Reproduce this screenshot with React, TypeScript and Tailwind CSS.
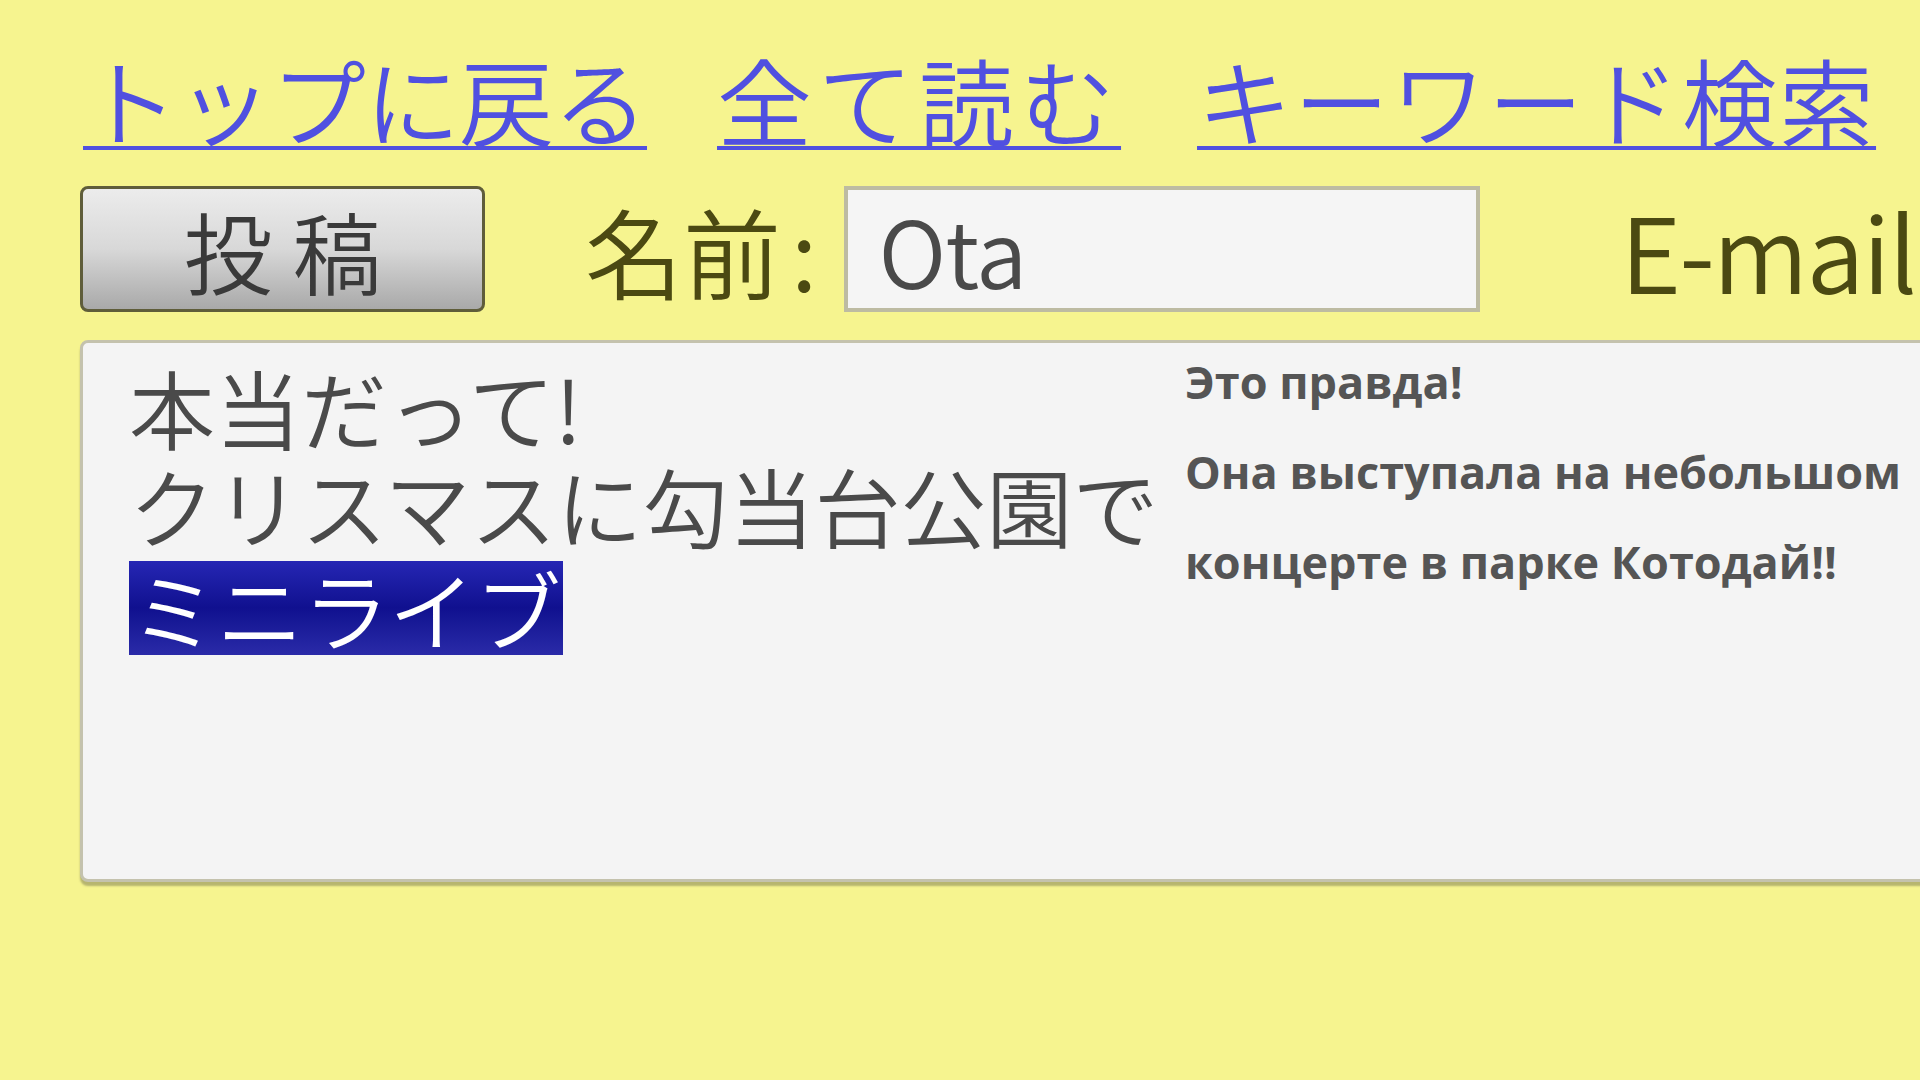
import React from 'react';

const jp = '"Noto Sans CJK JP", "Noto Sans", sans-serif';

export default function App() {
  return (
    <div
      className="w-[1920px] h-[1080px] overflow-hidden bg-[#f6f48f] pl-[80px] pt-[44px]"
      style={{ fontFamily: jp }}
    >
      {/* nav links */}
      <nav className="flex items-end pl-[3px] whitespace-nowrap">
        <a href="#" className="text-[95px] leading-[110px] font-[350] text-[#5050e0] underline decoration-[4px] underline-offset-[6px] tracking-[-1px]">
          トップに戻る
        </a>
        <a href="#" className="ml-[70px] text-[95px] leading-[110px] font-[350] text-[#5050e0] underline decoration-[4px] underline-offset-[6px] tracking-[6px]">
          全て読む
        </a>
        <a href="#" className="ml-[76px] text-[95px] leading-[110px] font-[350] text-[#5050e0] underline decoration-[4px] underline-offset-[6px] tracking-[2px]">
          キーワード検索
        </a>
      </nav>

      {/* form row */}
      <div className="flex items-center mt-[32px] whitespace-nowrap">
        <button className="w-[405px] h-[126px] shrink-0 rounded-[8px] border-[3px] border-[#5f5d3a] bg-gradient-to-b from-[#ececec] via-[#d8d8d8] to-[#a9a9a9] text-[89px] leading-none font-[350] text-[#3a3a3a] tracking-[20px] pl-[20px]">
          投稿
        </button>
        <span className="ml-[100px] text-[98px] leading-none font-[350] text-[#4b4912]">
          名前<span className="ml-[10px]">:</span>
        </span>
        <div className="ml-[27px] w-[636px] h-[126px] shrink-0 bg-[#f5f5f5] border-[4px] border-[#bdbba2] flex items-center pl-[30px]">
          <span className="text-[92px] leading-none font-[350] text-[#4a4a4a] tracking-[-1px]">Ota</span>
        </div>
        <span className="ml-[140px] text-[104px] leading-none font-[350] text-[#4b4912] tracking-[-2px]">E-mail</span>
      </div>

      {/* message area */}
      <div className="mt-[28px] w-[1900px] h-[542px] bg-[#f4f4f4] border-[3px] border-[#c4c2ad] rounded-l-[8px] shadow-[0_4px_2px_rgba(120,118,80,0.5)] flex">
        <div className="w-[1102px] pl-[46px] pt-[15px] text-[86px] leading-[98px] font-[350] text-[#4a4a4a] whitespace-nowrap">
          <div>本当だって!</div>
          <div>クリスマスに勾当台公園で</div>
          <div className="pt-[5px]">
            <span className="inline-block bg-gradient-to-b from-[#2626b4] via-[#10108f] to-[#2a2aa8] text-white px-[2px] leading-[94px]">
              ミニライブ
            </span>
          </div>
        </div>
        <div
          className="-mt-[6px] text-[45px] leading-[90px] font-bold text-[#555555] whitespace-nowrap"
          style={{ fontFamily: '"Open Sans", "Noto Sans", sans-serif' }}
        >
          <div>Это правда!</div>
          <div>Она выступала на небольшом</div>
          <div>концерте в парке Котодай!!</div>
        </div>
      </div>
    </div>
  );
}
